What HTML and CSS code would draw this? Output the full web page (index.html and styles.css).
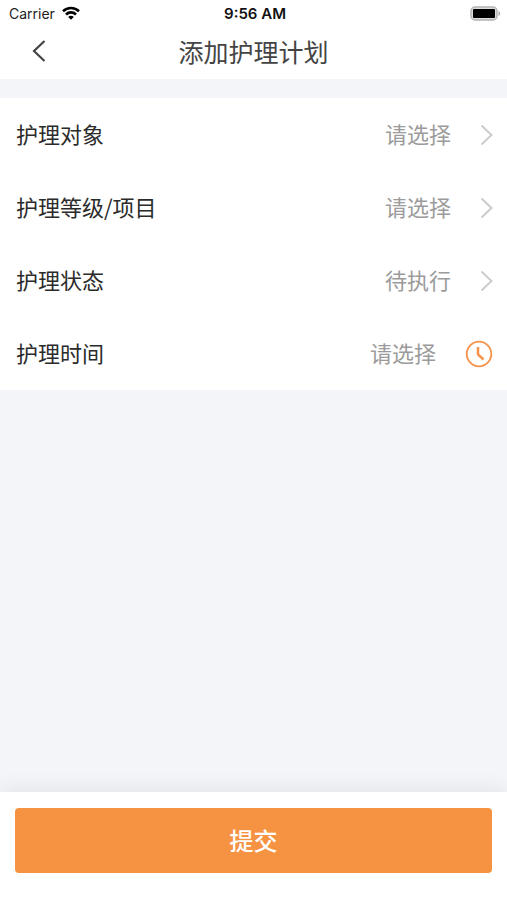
FILE: index.html
```html
<!DOCTYPE html>
<html lang="zh-CN">
<head>
<meta charset="utf-8">
<meta name="viewport" content="width=device-width, initial-scale=1">
<title>添加护理计划</title>
<link rel="stylesheet" href="styles.css">
</head>
<body>
<div class="screen">
  <div class="status-bar">
    <div class="carrier">
      <span>Carrier</span>
      <svg width="18" height="14" viewBox="0 0 18 14" fill="none" stroke="#000" stroke-width="2.6" aria-hidden="true">
        <path d="M1 5.2C5.5.9 12.500.9 17 5.200"/>
        <path d="M4 8.500C6.800 5.700 11.200 5.700 14 8.500"/>
        <path d="M9 13.800 6.200 10.900C7.800 9.400 10.200 9.400 11.800 10.900Z" fill="#000" stroke="none"/>
      </svg>
    </div>
    <time class="clock">9:56 AM</time>
    <svg class="battery" width="31" height="15" viewBox="0 0 31 15" aria-hidden="true">
      <rect x="1" y="1" width="26" height="13" rx="4" fill="#ddd" stroke="#b4b4b4" stroke-width="1.500"/>
      <rect x="3" y="3" width="22" height="9" rx="1" fill="#000"/>
      <path d="M28.500 5v5c2.200-.8 2.200-4.200 0-5Z" fill="#aaa"/>
    </svg>
  </div>
  <header class="nav">
    <button class="back" type="button" aria-label="返回">
      <svg width="14" height="24" viewBox="0 0 14 24" fill="none" stroke="#444" stroke-width="2.200" aria-hidden="true"><path d="M12.500 2 2 12l10.500 10"/></svg>
    </button>
    <h1 class="title">添加护理计划</h1>
  </header>
  <main class="form">
    <button class="row" type="button">
      <span class="label">护理对象</span><span class="value">请选择</span>
      <svg class="chevron" width="13" height="22" viewBox="0 0 13 22" aria-hidden="true"><path d="m1.500 1.500 10 9.500-10 9.500"/></svg>
    </button>
    <button class="row" type="button">
      <span class="label">护理等级/项目</span><span class="value">请选择</span>
      <svg class="chevron" width="13" height="22" viewBox="0 0 13 22" aria-hidden="true"><path d="m1.500 1.500 10 9.500-10 9.500"/></svg>
    </button>
    <button class="row" type="button">
      <span class="label">护理状态</span><span class="value">待执行</span>
      <svg class="chevron" width="13" height="22" viewBox="0 0 13 22" aria-hidden="true"><path d="m1.500 1.500 10 9.500-10 9.500"/></svg>
    </button>
    <button class="row" type="button">
      <span class="label">护理时间</span><span class="value">请选择</span>
      <svg width="28" height="28" viewBox="0 0 28 28" fill="none" stroke="#f5934a" aria-hidden="true"><circle cx="14" cy="14" r="12.300" stroke-width="1.800"/><path d="M13 7v7.500l5.500 5" stroke-width="2.500"/></svg>
    </button>
  </main>
  <footer class="actions">
    <button class="submit" type="button">提交</button>
  </footer>
</div>
</body>
</html>
```

FILE: styles.css
```css
* {
  box-sizing: border-box;
}

body {
  margin: 0;
  background: #f3f5f9;
  font-family: "Noto Sans CJK SC", sans-serif;
}

button {
  border: 0;
  padding: 0;
  background: none;
  font: inherit;
  cursor: pointer;
}

svg {
  display: block;
  flex: none;
}

.screen {
  display: flex;
  flex-direction: column;
  min-height: 100vh;
}

.status-bar {
  display: grid;
  grid-template-columns: 1fr auto 1fr;
  align-items: center;
  height: 28px;
  padding: 0 6px 2px 9px;
  background: #fff;
  color: #222;
  font-family: Inter, sans-serif;
  font-size: 14px;
}

.carrier {
  display: flex;
  align-items: center;
  gap: 7px;
}

.clock {
  color: #111;
  font-size: 15px;
  font-weight: 600;
}

.battery {
  justify-self: end;
}

.nav {
  display: grid;
  grid-template-columns: 48px 1fr 48px;
  align-items: center;
  height: 51px;
  padding: 0 15px 5px;
  background: #fff;
}

.back {
  display: flex;
  align-items: center;
  justify-content: center;
  height: 44px;
}

.title {
  margin: 0;
  color: #444;
  font-size: 25px;
  font-weight: 400;
  line-height: 36px;
  text-align: center;
}

.form {
  margin-top: 19px;
  background: #fff;
}

.row {
  display: flex;
  align-items: center;
  gap: 29px;
  width: 100%;
  height: 73px;
  padding: 0 14px 0 16px;
  font-size: 22px;
  line-height: 32px;
}

.label,
.value {
  padding-bottom: 4px;
}

.label {
  flex: 1;
  color: #2b2b2b;
  text-align: left;
}

.value {
  color: #9b9b9b;
}

.chevron {
  fill: none;
  stroke: #ccc;
  stroke-width: 2;
}

.actions {
  margin-top: auto;
  padding: 16px 15px 27px;
  background: #fff;
  box-shadow: 0 -2px 20px rgb(0 0 0 / 8%);
}

.submit {
  width: 100%;
  height: 65px;
  padding-bottom: 2px;
  border-radius: 4px;
  background: #f69343;
  color: #fff;
  font-size: 24px;
  font-weight: 500;
}
```
